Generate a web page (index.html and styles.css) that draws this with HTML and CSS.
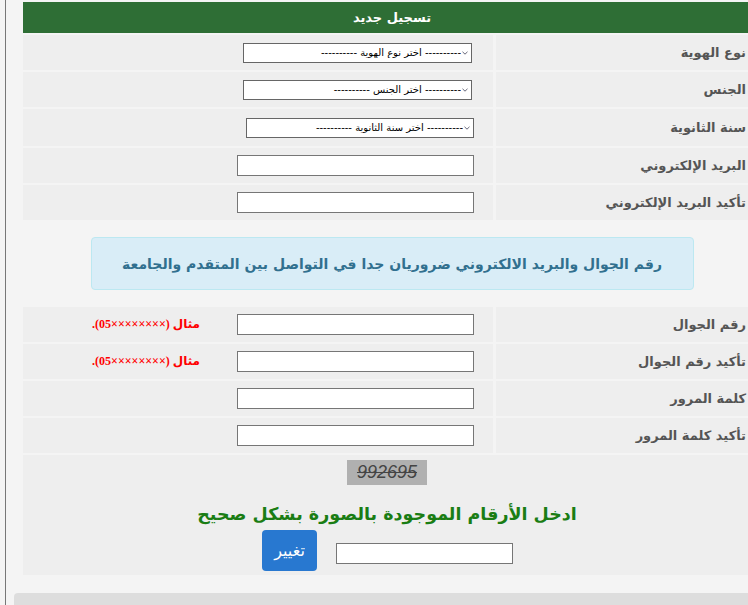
FILE: index.html
```html
<!DOCTYPE html>
<html lang="ar">
<head>
<meta charset="utf-8">
<title>تسجيل جديد</title>
<link rel="stylesheet" href="styles.css">
</head>
<body>
<div class="page">
  <div class="form">
    <div class="head">تسجيل جديد</div>

    <div class="row">
      <div class="label">نوع الهوية</div>
      <div class="field"><select class="sel"><option>---------- اختر نوع الهوية ----------</option></select></div>
    </div>
    <div class="row">
      <div class="label">الجنس</div>
      <div class="field"><select class="sel"><option>---------- اختر الجنس ----------</option></select></div>
    </div>
    <div class="row row-tall">
      <div class="label">سنة الثانوية</div>
      <div class="field"><select class="sel sel-wide"><option>---------- اختر سنة الثانوية ----------</option></select></div>
    </div>
    <div class="row">
      <div class="label">البريد الإلكتروني</div>
      <div class="field"><input class="txt" type="text"></div>
    </div>
    <div class="row">
      <div class="label">تأكيد البريد الإلكتروني</div>
      <div class="field"><input class="txt" type="text"></div>
    </div>

    <div class="notice-row">
      <div class="alert">رقم الجوال والبريد الالكتروني ضروريان جدا في التواصل بين المتقدم والجامعة</div>
    </div>

    <div class="row">
      <div class="label">رقم الجوال</div>
      <div class="field"><input class="txt" type="text"><span class="hint">مثال (××××××××05).</span></div>
    </div>
    <div class="row">
      <div class="label">تأكيد رقم الجوال</div>
      <div class="field"><input class="txt" type="text"><span class="hint">مثال (××××××××05).</span></div>
    </div>
    <div class="row">
      <div class="label">كلمة المرور</div>
      <div class="field"><input class="txt" type="password"></div>
    </div>
    <div class="row">
      <div class="label">تأكيد كلمة المرور</div>
      <div class="field"><input class="txt" type="password"></div>
    </div>

    <div class="captcha-row">
      <div class="captcha-img"><span>992695</span></div>
      <div class="captcha-msg">ادخل الأرقام الموجودة بالصورة بشكل صحيح</div>
      <div class="captcha-ctrl">
        <input class="captcha-input" type="text">
        <button class="btn" type="button">تغيير</button>
      </div>
    </div>
  </div>
  <div class="footer-bar"></div>
</div>
</body>
</html>
```

FILE: styles.css
```css
html, body {
  margin: 0;
  padding: 0;
  background: #f4f4f4;
  overflow: hidden;
}

body {
  font-family: "DejaVu Sans", sans-serif;
}

.page {
  margin-left: 5px;
  border-left: 1px solid #777;
  min-height: 605px;
  padding-left: 17px;
  padding-top: 2px;
  box-sizing: border-box;
}

.form {
  width: 738px;
  direction: rtl;
  display: flex;
  flex-direction: column;
  gap: 2px;
}

.head {
  height: 31px;
  background: #2e6e35;
  color: #fff;
  font-weight: bold;
  font-size: 13px;
  display: flex;
  align-items: center;
  justify-content: center;
}

.row {
  display: grid;
  grid-template-columns: 265px 470px;
  column-gap: 3px;
  height: 35px;
}

.row-tall {
  height: 37px;
}

.label {
  background: #eee;
  color: #555;
  font-weight: bold;
  font-size: 13px;
  display: flex;
  align-items: center;
  padding-right: 15px;
}

.field {
  background: #eee;
  display: flex;
  align-items: center;
  padding-right: 19px;
  gap: 37px;
}

.txt {
  width: 237px;
  height: 21px;
  box-sizing: border-box;
  border: 1px solid #767676;
  background: #fff;
  margin: 0;
  padding: 0 2px;
}

.sel {
  -webkit-appearance: none;
  appearance: none;
  width: 229px;
  height: 20px;
  box-sizing: border-box;
  margin: 0 2px 0 0;
  border: 1px solid #666;
  border-radius: 0;
  background: #fff url("data:image/svg+xml,%3Csvg xmlns='http://www.w3.org/2000/svg' width='6' height='4' viewBox='0 0 6 4'%3E%3Cpath d='M0.5 0.8 L3 3.2 L5.5 0.8' fill='none' stroke='%23667' stroke-width='1'/%3E%3C/svg%3E") no-repeat right 3px center;
  padding: 0 10px 0 4px;
  font-family: "DejaVu Sans", sans-serif;
  font-size: 10px;
  color: #000;
  direction: rtl;
}

.sel-wide {
  width: 228px;
  margin-right: 0;
}

.hint {
  color: #f00;
  font-weight: bold;
  font-size: 12px;
  font-family: "Liberation Serif", "DejaVu Sans", serif;
}

.notice-row {
  height: 83px;
  display: flex;
  align-items: center;
  justify-content: center;
}

.alert {
  width: 603px;
  height: 53px;
  box-sizing: border-box;
  background: #d9edf7;
  border: 1px solid #bce8f1;
  border-radius: 4px;
  color: #31708f;
  font-weight: bold;
  font-size: 14px;
  display: flex;
  align-items: center;
  justify-content: center;
}

.captcha-row {
  height: 120px;
  background: #eee;
  display: flex;
  flex-direction: column;
  align-items: center;
  padding-top: 5px;
  box-sizing: border-box;
}

.captcha-img {
  width: 80px;
  height: 25px;
  background: #b0b0b0;
  margin-right: 10px;
  display: flex;
  align-items: center;
  justify-content: center;
  direction: ltr;
}

.captcha-img span {
  font-family: "Liberation Sans", sans-serif;
  font-style: italic;
  font-size: 18px;
  color: #444;
  text-decoration: line-through;
}

.captcha-msg {
  margin-top: 17px;
  margin-right: 10px;
  height: 24px;
  line-height: 24px;
  color: #1a7d14;
  font-weight: bold;
  font-size: 17.5px;
}

.captcha-ctrl {
  margin-top: 4px;
  margin-right: 9px;
  display: flex;
  align-items: flex-end;
  gap: 19px;
}

.captcha-input {
  width: 177px;
  height: 21px;
  box-sizing: border-box;
  border: 1px solid #767676;
  background: #fff;
  margin: 0 0 7px 0;
}

.btn {
  width: 55px;
  height: 41px;
  border: none;
  border-radius: 4px;
  background: #2878d0;
  color: #fff;
  font-family: "DejaVu Sans", sans-serif;
  font-size: 16px;
  padding: 0;
}

.footer-bar {
  margin-top: 18px;
  margin-left: -9px;
  width: 760px;
  height: 20px;
  background: #ddd;
  border-top-left-radius: 4px;
}
```
